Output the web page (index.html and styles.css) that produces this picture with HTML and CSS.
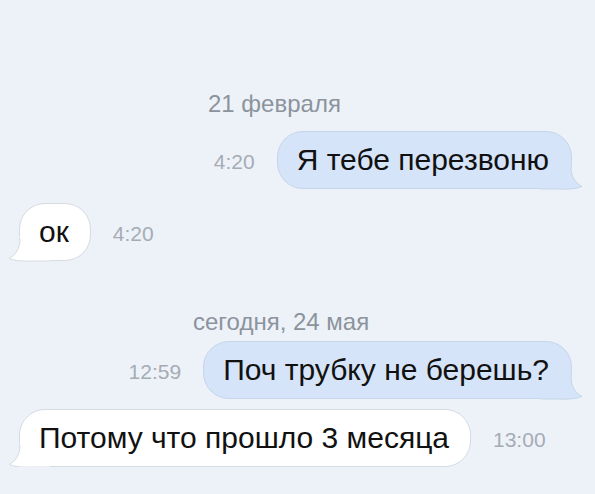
FILE: index.html
```html
<!DOCTYPE html>
<html lang="ru">

<head>
    <meta charset="UTF-8">
    <meta name="viewport" content="width=device-width, initial-scale=1.0">
    <title>Сообщения</title>
    <link rel="stylesheet" href="styles.css">
</head>

<body>
    <div class="chat">
        <!-- February -->
        <div class="date date-feb">21 февраля</div>

        <div class="row row-out first">
            <span class="time">4:20</span>
            <div class="bubble bubble-out">
                <span class="text">Я тебе перезвоню</span>
                <svg class="tail" viewBox="0 0 40 30" width="40" height="30">
                    <path class="tail-fill" d="M-2 0 H28 V8 C28 17 32 24 39 27.5 C33 30 24 30.5 16 30 H-2 Z" />
                    <path class="tail-line" d="M28 8 C28 17 32 24 39 27.5 C33 30 24 30.5 16 30 H-2" />
                </svg>
            </div>
        </div>

        <div class="row row-in second">
            <div class="bubble bubble-in">
                <span class="text">ок</span>
                <svg class="tail" viewBox="0 0 40 30" width="40" height="30">
                    <path class="tail-fill" d="M-2 0 H28 V8 C28 17 32 24 39 27.5 C33 30 24 30.5 16 30 H-2 Z" />
                    <path class="tail-line" d="M28 8 C28 17 32 24 39 27.5 C33 30 24 30.5 16 30 H-2" />
                </svg>
            </div>
            <span class="time">4:20</span>
        </div>

        <!-- Today -->
        <div class="date date-today">сегодня, 24 мая</div>

        <div class="row row-out third">
            <span class="time">12:59</span>
            <div class="bubble bubble-out">
                <span class="text">Поч трубку не берешь?</span>
                <svg class="tail" viewBox="0 0 40 30" width="40" height="30">
                    <path class="tail-fill" d="M-2 0 H28 V8 C28 17 32 24 39 27.5 C33 30 24 30.5 16 30 H-2 Z" />
                    <path class="tail-line" d="M28 8 C28 17 32 24 39 27.5 C33 30 24 30.5 16 30 H-2" />
                </svg>
            </div>
        </div>

        <div class="row row-in fourth">
            <div class="bubble bubble-in">
                <span class="text">Потому что прошло 3 месяца</span>
                <svg class="tail" viewBox="0 0 40 30" width="40" height="30">
                    <path class="tail-fill" d="M-2 0 H28 V8 C28 17 32 24 39 27.5 C33 30 24 30.5 16 30 H-2 Z" />
                    <path class="tail-line" d="M28 8 C28 17 32 24 39 27.5 C33 30 24 30.5 16 30 H-2" />
                </svg>
            </div>
            <span class="time">13:00</span>
        </div>
    </div>
</body>

</html>
```

FILE: styles.css
```css
body {
    margin: 0;
    background-color: #edf2f9;
    font-family: 'Liberation Sans', Arial, sans-serif;
    color: #111;
}

.chat {
    display: flex;
    flex-direction: column;
    padding: 90px 23px 0 19px;
}

.date {
    font-size: 24px;
    line-height: 28px;
    color: #8c939c;
}

.date-feb {
    padding-left: 189px;
}

.date-today {
    padding-left: 174px;
    margin-top: 47px;
}

.row {
    display: flex;
    align-items: center;
    gap: 22px;
}

.row-out {
    justify-content: flex-end;
}

.first {
    margin-top: 13px;
}

.second {
    margin-top: 14px;
}

.third {
    margin-top: 5px;
}

.fourth {
    margin-top: 10px;
}

.time {
    font-size: 21px;
    padding-top: 3px;
    color: #a6acb4;
}

.bubble {
    position: relative;
    font-size: 30px;
    line-height: 36px;
    padding: 10px 22px 10px 19px;
    border: 1px solid;
    border-radius: 26px;
}

.bubble .text {
    position: relative;
    z-index: 1;
}

.bubble-out {
    background-color: #d5e4f8;
    border-color: #c6d5ea;
}

.bubble-in {
    background-color: #ffffff;
    border-color: #d6dbe2;
    padding: 10px 21px 10px 19px;
}

/* tail of the bubble, drawn over the bottom corner */
.tail {
    position: absolute;
    bottom: -1px;
    right: -12px;
    overflow: visible;
}

.bubble-in .tail {
    right: auto;
    left: -12px;
    transform: scaleX(-1);
}

.tail-line {
    fill: none;
    stroke-width: 1;
}

.bubble-out .tail-fill {
    fill: #d5e4f8;
}

.bubble-out .tail-line {
    stroke: #c6d5ea;
}

.bubble-in .tail-fill {
    fill: #ffffff;
}

.bubble-in .tail-line {
    stroke: #d6dbe2;
}
```
